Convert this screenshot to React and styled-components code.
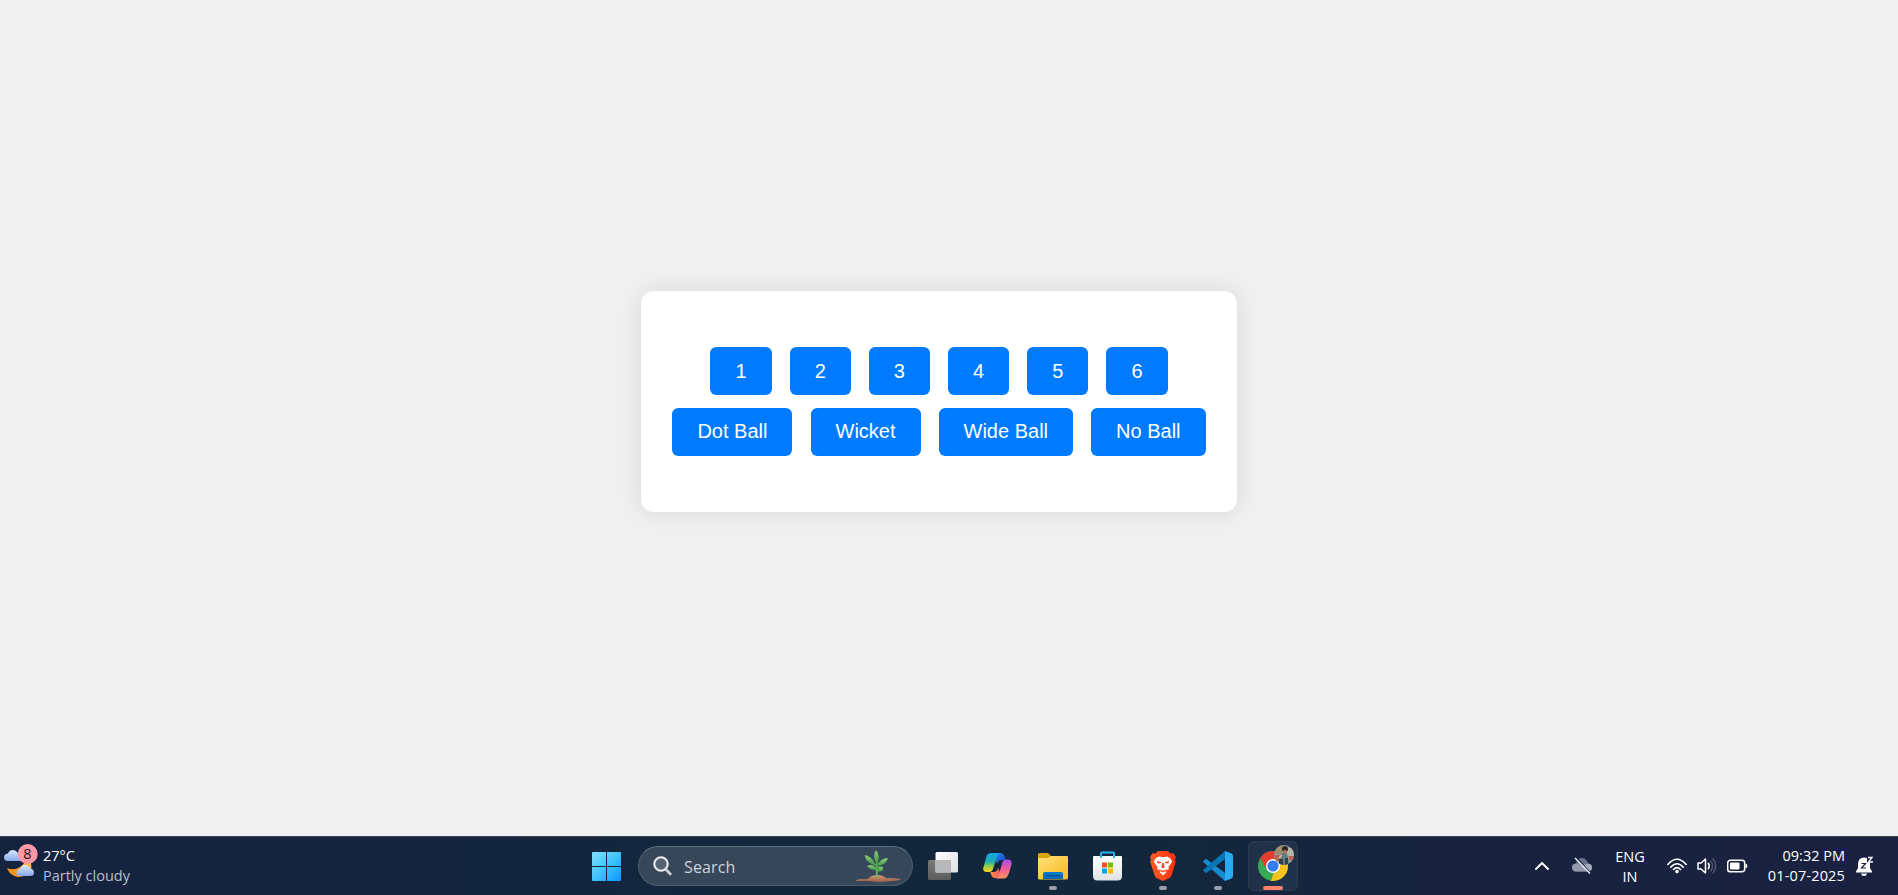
import React from "react";
import styled, { createGlobalStyle } from "styled-components";

const GlobalStyle = createGlobalStyle`
  * { box-sizing: border-box; }
  html, body, #root { height: 100%; }
  body { margin: 0; background: #f0f0f0; overflow: hidden; }
`;

const Screen = styled.div`
  display: flex;
  flex-direction: column;
  height: 895px;
  width: 1898px;
`;

const Page = styled.main`
  flex: 1;
  padding: 291px 20px 0 0;
  display: flex;
  justify-content: center;
  align-items: flex-start;
  background: #f0f0f0;
`;

const Card = styled.section`
  width: 596px;
  height: 221px;
  padding-top: 56px;
  display: flex;
  flex-direction: column;
  align-items: center;
  gap: 13px;
  background: #fff;
  border-radius: 12.5px;
  box-shadow: 0 0 25px rgba(0, 0, 0, 0.1);
`;

const ButtonRow = styled.div`
  display: flex;
  gap: ${(p) => p.$gap}px;
`;

const ScoreButton = styled.button`
  height: 48px;
  padding: ${(p) => (p.$raised ? "0 25px 1px" : "0 25px")};
  border: 0;
  border-radius: 6.25px;
  background: #007bff;
  color: #fff;
  font: 20px "Liberation Sans", Arial, sans-serif;
  white-space: nowrap;
`;

const Taskbar = styled.footer`
  height: 59px;
  display: flex;
  border-top: 1px solid #3b4652;
  background: linear-gradient(90deg, #15233f 0, #14243f 400px, #12273d 700px, #12273c 1150px, #17233f 1450px, #1a2140 1898px);
  font-family: "Open Sans", "Noto Sans", sans-serif;
  color: #fff;
`;

const Weather = styled.div`
  width: 579px;
  padding-left: 4px;
  display: flex;
`;

const WeatherText = styled.div`
  padding: 9px 0 0 5px;
  display: flex;
  flex-direction: column;
`;

const Label = styled.span`
  height: 20px;
  line-height: 20px;
  font-size: ${(p) => p.$size || 14.5}px;
  letter-spacing: ${(p) => p.$track || 0}px;
  color: ${(p) => (p.$dim ? "#b9bfca" : "#fff")};
  white-space: nowrap;
`;

const Slot = styled.div`
  width: ${(p) => p.$width || 55}px;
  height: 58px;
  display: flex;
  align-items: center;
  justify-content: center;
  position: relative;
`;

const ActiveTile = styled.div`
  width: 50px;
  height: 50px;
  border-radius: 6px;
  border: 1px solid #2b3b50;
  background: #20314a;
  display: flex;
  align-items: center;
  justify-content: center;
`;

const Indicator = styled.span`
  position: absolute;
  bottom: 5px;
  width: ${(p) => (p.$active ? 20 : 8)}px;
  height: 4px;
  border-radius: 2px;
  background: ${(p) => (p.$active ? "#f9836c" : "#989eaa")};
`;

const Search = styled.div`
  width: 275px;
  height: 40px;
  margin: 9px 2px 0 4px;
  padding: 0 10px 0 14px;
  display: flex;
  align-items: center;
  border: 1px solid #4a5b6c;
  border-top-color: #617080;
  border-radius: 20px;
  background: #36475a;
`;

const SearchText = styled.span`
  flex: 1;
  padding: 1px 0 0 12px;
  font-size: 16px;
  letter-spacing: 0.15px;
  color: #ced4dc;
`;

const Tray = styled.div`
  margin-left: auto;
  padding-right: 13px;
  display: flex;
`;

const Language = styled.div`
  width: 56px;
  margin-right: 4px;
  padding-top: 10px;
  display: flex;
  flex-direction: column;
  align-items: center;
`;

const Clock = styled.div`
  width: 93px;
  padding-top: 9px;
  display: flex;
  flex-direction: column;
  align-items: flex-end;
`;

const WeatherIcon = () => (
  <svg width="34" height="58" viewBox="4 837 34 58">
    <defs>
      <linearGradient id="cl" x1="0" y1="0" x2="0" y2="1"><stop stopColor="#dceaff" /><stop offset="1" stopColor="#86a8ea" /></linearGradient>
      <linearGradient id="mn" x1="1" y1="0" x2="0" y2="1"><stop stopColor="#ffc44a" /><stop offset="1" stopColor="#ed830c" /></linearGradient>
    </defs>
    <path d="M8 861Q4 861 4 857.500Q4 854 8 853.500Q9 850 13 850Q16 850 18 853L24 857V861Z" fill="url(#cl)" />
    <path d="M27 857Q33 863 31 870Q27 877 18 877Q10 876 7 868Q14 871 20 867Q26 863 25 858Z" fill="url(#mn)" />
    <path d="M20 876Q16.500 876 16.500 872.500Q17 869.500 20 869Q21 865 25.500 865Q29 865 30 868.500Q34 869 34 872.500Q34 876 30 876Z" fill="url(#cl)" />
    <circle cx="27.700" cy="854" r="10" fill="#ff98a4" />
    <text x="27.400" y="859" textAnchor="middle" fontSize="14.500" fontFamily="Open Sans" fill="#17171c">8</text>
  </svg>
);

const StartIcon = () => (
  <svg width="29" height="29" viewBox="0 0 29 29">
    <defs><linearGradient id="st" gradientUnits="userSpaceOnUse" x1="0" y1="0" x2="29" y2="29"><stop stopColor="#83e1fc" /><stop offset=".55" stopColor="#3bbffd" /><stop offset="1" stopColor="#0c94fb" /></linearGradient></defs>
    <path d="M1 0h13v14H0V1Q0 0 1 0ZM15 0h13q1 0 1 1v13H15ZM0 15h14v14H1q-1 0-1-1ZM15 15h14v13q0 1-1 1H15Z" fill="url(#st)" />
  </svg>
);

const SearchIcon = () => (
  <svg width="19" height="20" viewBox="0 0 19 20" fill="none">
    <circle cx="8" cy="8" r="6.700" stroke="#e9ecf0" strokeWidth="2.100" fill="#536172" />
    <path d="M13 13.500 17.300 18" stroke="#cfd3d9" strokeWidth="2.600" strokeLinecap="round" />
  </svg>
);

const PlantIcon = () => (
  <svg width="47" height="32" viewBox="0 0 47 32">
    <defs>
      <linearGradient id="lf" x1="0" y1="0" x2="0" y2="1"><stop stopColor="#8ccc78" /><stop offset="1" stopColor="#409648" /></linearGradient>
      <linearGradient id="so" x1="0" y1="0" x2="0" y2="1"><stop stopColor="#d99a77" /><stop offset="1" stopColor="#995d46" /></linearGradient>
    </defs>
    <path d="M1 31Q1 29 7 29Q11 30 14 28Q17 25 22 25Q28 25 31 28Q38 28 46 29Q43 31 36 31Q24 33 14 31Z" fill="url(#so)" />
    <path d="M22 28Q21 19 22 8" stroke="#64b65b" strokeWidth="1.700" fill="none" />
    <g fill="url(#lf)">
      <path d="M21.500 14Q17 6 21 0Q26 6 22 14Z" />
      <path d="M20.500 15Q11 13 9.500 5Q17 6 20.500 15Z" />
      <path d="M22 16Q25 8 33 8Q31 15 22 16Z" />
      <path d="M20.500 20Q15 20 12 16Q19 13 22 20Z" />
      <path d="M21.500 21Q23 15 28 17Q29 23 21.500 21Z" />
    </g>
    <path d="M17 13Q27 17 22 22" stroke="#4aa451" strokeWidth="1.500" fill="none" />
  </svg>
);

const TaskViewIcon = () => (
  <svg width="30" height="28" viewBox="0 0 30 28">
    <defs><linearGradient id="tv" x2="1" y2="1"><stop stopColor="#fff" /><stop offset="1" stopColor="#dedfe1" /></linearGradient><linearGradient id="tg" x2="0" y2="1"><stop stopColor="#7b7b7b" /><stop offset="1" stopColor="#5b5b5b" /></linearGradient></defs>
    <rect y="8" width="23" height="20" rx="1.500" fill="url(#tg)" />
    <rect x="7.500" width="22.500" height="20.500" rx="1.500" fill="url(#tv)" />
    <path d="M7.500 8H23v12.500H7.500Z" fill="#b8b9ba" />
  </svg>
);

const CopilotIcon = () => (
  <svg width="29" height="26" viewBox="0 0 29 26">
    <defs>
      <linearGradient id="ca" x2="0" y2="1"><stop stopColor="#12a5e9" /><stop offset=".45" stopColor="#22acb0" /><stop offset=".7" stopColor="#8fcb49" /><stop offset="1" stopColor="#ffd51d" /></linearGradient>
      <linearGradient id="cb" x2="0" y2="1"><stop stopColor="#a54ce8" /><stop offset=".5" stopColor="#ef5b98" /><stop offset="1" stopColor="#ff9859" /></linearGradient>
      <linearGradient id="cc" x2="1" y2="1"><stop stopColor="#2787ef" /><stop offset="1" stopColor="#1744c3" /></linearGradient>
      <linearGradient id="cd" x2="1"><stop stopColor="#fa9846" /><stop offset="1" stopColor="#f64e64" /></linearGradient>
    </defs>
    <path d="M14 0h3q3.500 0 4.500 3.500L23 7h-4q-4 0-5 4L11 5Z" fill="url(#cc)" />
    <path d="M7 19h4q3 0 4-4l3 6q-1 4-4 4h-2q-3 0-4-4Z" fill="url(#cd)" />
    <path d="M8 0h10q-3 0-4 4l-4 12q-1 3-4 3H4Q-1 19 .500 14L3 5Q4 0 8 0Z" fill="url(#ca)" />
    <path d="M20 6.500h5q4.500 0 3.500 5L26 20q-1.500 5.500-6 5.500h-8q3 0 4-4l3-11q1-4 4-4Z" fill="url(#cb)" />
  </svg>
);

const FolderIcon = () => (
  <svg width="30" height="28" viewBox="0 0 30 28">
    <defs><linearGradient id="fo" x2="1" y2="1"><stop stopColor="#ffe079" /><stop offset="1" stopColor="#f8b91f" /></linearGradient><linearGradient id="fb" x2="0" y2="1"><stop stopColor="#087cd3" /><stop offset="1" stopColor="#0767bb" /></linearGradient></defs>
    <path d="M0 9V2Q0 1 2 1h8l3 3v5Z" fill="#dca209" />
    <path d="M0 6h10l3-2h16q1 0 1 1v21q0 1.500-1.500 1.500h-27Q0 27.500 0 26Z" fill="url(#fo)" />
    <path d="M5 27v-5q0-2 2-2h16q2 0 2 2v5Z" fill="url(#fb)" />
    <path d="M8 23.700h14" stroke="#064b8d" strokeWidth="1.200" />
  </svg>
);

const StoreIcon = () => (
  <svg width="29" height="30" viewBox="0 0 29 30">
    <defs><linearGradient id="ms" x2="0" y2="1"><stop stopColor="#fff" /><stop offset="1" stopColor="#dfe2e5" /></linearGradient></defs>
    <path d="M0 5.500Q0 5 1 5h27q1 0 1 .700V25q0 4.500-4.500 4.500h-20Q0 29.500 0 25Z" fill="url(#ms)" />
    <path d="M8 7V2.200Q8 1.500 9 1.500h11q1 0 1 .700V7" fill="none" stroke="#20b5ec" strokeWidth="2" />
    <path d="M9 11.500h5v5H9Z" fill="#f25022" /><path d="M15 11.500h5v5h-5Z" fill="#7fba00" />
    <path d="M9 17.500h5v5H9Z" fill="#00a4ef" /><path d="M15 17.500h5v5h-5Z" fill="#ffb900" />
  </svg>
);

const BraveIcon = () => (
  <svg width="26" height="30" viewBox="0 0 26 30">
    <defs><linearGradient id="br" x2="1"><stop stopColor="#ff5b25" /><stop offset="1" stopColor="#f8320c" /></linearGradient></defs>
    <path d="M8 0h10l2.500 2.500 3-.300L26 6l-1 2.500.700 2.500-4 13Q21 26 19.500 27L13 30l-6.500-3Q5 26 4.500 24L.300 11 1 8.500 0 6l2.500-3.800 3 .300Z" fill="url(#br)" />
    <path d="M13 6.300 17 5.500 20 7 22.300 10.500 20.500 13.300 18.500 15.800 19 18 15.500 19.500 16.500 21 13 24.500 9.500 21 10.500 19.500 7 18 7.500 15.800 5.500 13.300 3.700 10.500 6 7 9 5.500Z" fill="#fff" />
    <path d="m7 10 4 1v1l-3.500.500Zm12 0-4 1v1l3.500.500ZM12 12h2l.500 4.500L13 17.500l-1.500-1ZM9.500 18.500 13 19.700l3.500-1.200-1 2L13 21.500l-2.500-1Z" fill="#fb4a20" />
  </svg>
);

const VscodeIcon = () => (
  <svg width="30" height="30" viewBox="0 0 30 30">
    <path d="m.500 10 2-1.800q.600-.500 1.300 0L22 22v8L.500 11.300Q0 10.700.500 10Z" fill="#168bcf" />
    <path d="m.500 20 2 1.800q.600.500 1.300 0L22 8V0L.500 18.700Q0 19.300.500 20Z" fill="#0875b9" />
    <path d="m22 0 6.500 2.500Q30 3.200 30 5v20q0 1.800-1.500 2.500L22 30Z" fill="#29aaf2" />
  </svg>
);

const ChromeIcon = () => (
  <svg width="36" height="38" viewBox="1258 843 36 38">
    <defs>
      <clipPath id="cr"><circle cx="1273" cy="866" r="15" /></clipPath>
      <clipPath id="av"><circle cx="1284" cy="855" r="10" /></clipPath>
    </defs>
    <g clipPath="url(#cr)">
      <path d="M1258 851h30v30h-30Z" fill="#37a853" />
      <path d="M1273 859h15v22h-15l6.100-11Z" fill="#fcc31b" />
      <path d="M1279.100 870 1273 881h-2l4-12Z" fill="#fcc31b" />
      <path d="M1258 850h30v9h-15l-6.100 10.500L1260 858Z" fill="#e33c31" />
    </g>
    <circle cx="1273" cy="866" r="7" fill="#fff" /><circle cx="1273" cy="866" r="5.600" fill="#347cf0" />
    <g clipPath="url(#av)">
      <path d="M1274 845h20v20h-20Z" fill="#8aa097" />
      <path d="M1274 845h8v9h-8Z" fill="#9c8d6c" /><path d="M1286 848h8v8h-8Z" fill="#b4b7a3" />
      <path d="M1274 855h7v6h-7Z" fill="#b66554" /><path d="M1289 856h5v4h-5Z" fill="#c3634f" />
      <path d="M1281 853h6l2 12h-8Z" fill="#607d88" />
      <path d="M1279 859h4v6h-4ZM1285 858h3v7h-3Z" fill="#31424b" />
      <circle cx="1285" cy="849" r="3" fill="#33251f" /><path d="M1283.500 850h3v4h-3Z" fill="#a87458" />
      <path d="m1282 855-3 3" stroke="#dcc0a8" strokeWidth="1.500" />
    </g>
  </svg>
);

const ChromeWrap = styled.div`
  width: 30px;
  height: 38px;
  margin-bottom: 8px;
  display: flex;
  svg { flex: none; }
`;

const ChevronIcon = () => (
  <svg width="14" height="8" viewBox="0 0 14 8"><path d="m1 7 6-6 6 6" fill="none" stroke="#fff" strokeWidth="1.900" strokeLinecap="round" /></svg>
);

const CloudOffIcon = () => (
  <svg width="20" height="18" viewBox="0 0 20 18">
    <path d="M4.500 14.500Q0 14.500 0 10.500 0 7 4 6.500 5.500 1 10 1t6 5.500q4 .500 4 4t-4 4Z" fill="#69728a" />
    <path d="M4.500 14.500Q0 14.500 0 10.500 0 7 4 6.500q2-.500 5 2l7 6Z" fill="#929aab" /><path d="m9 9 7-2.500q4 .500 4 4t-4 4Z" fill="#a5abb9" />
    <path d="m4.500 1 14 15" stroke="#1a2542" strokeWidth="1.600" /><path d="m3 1 15 15.500" stroke="#f3f4f6" strokeWidth="1.300" />
  </svg>
);

const WifiIcon = () => (
  <svg width="20" height="16" viewBox="0 0 20 16" fill="none" stroke="#fff" strokeWidth="1.600" strokeLinecap="round">
    <path d="M.800 6.500q9.200-10.500 18.400 0M3.700 9.200q6.300-7 12.600 0M6.500 11.500q3.500-3.800 7 0" />
    <circle cx="10" cy="13.600" r="1" fill="#fff" />
  </svg>
);

const SpeakerIcon = () => (
  <svg width="20" height="18" viewBox="0 0 20 18" fill="none" stroke="#fff" strokeWidth="1.500" strokeLinejoin="round" strokeLinecap="round">
    <path d="M1 6h3l4.500-4v14L4 12H1Z" /><path d="M11.300 6.300q2 2.700 0 5.400" />
    <path d="M13.700 4q3.800 5 0 10M16 2q5.500 7 0 14" stroke="#4c556f" />
  </svg>
);

const BatteryIcon = () => (
  <svg width="21" height="14" viewBox="0 0 21 14">
    <rect x=".700" y="1.200" width="17" height="11.600" rx="2.700" fill="none" stroke="#fff" strokeWidth="1.500" />
    <rect x="3" y="3.500" width="9.500" height="7" rx="1" fill="#fff" /><path d="M18.500 4.500q1.800.300 1.800 2.500t-1.800 2.500Z" fill="#fff" />
  </svg>
);

const BellIcon = () => (
  <svg width="18" height="21" viewBox="0 0 18 21">
    <path d="M2 7.500Q2.500 1.500 8 1.500t6 6V12l2 3.500v1H0v-1L2 12ZM5 17.500h6Q10.500 20 8 20t-3-2.500Z" fill="#fff" />
    <path d="M11 0h7v6.500h-7Z" fill="#1a2140" />
    <path d="M5.500 7.500h4l-4 4.500h4.500" fill="none" stroke="#1a2140" strokeWidth="1.200" />
    <path d="M12 1.500h4L12.500 6H17" fill="none" stroke="#fff" strokeWidth="1.300" />
  </svg>
);

const runs = ["1", "2", "3", "4", "5", "6"];
const events = ["Dot Ball", "Wicket", "Wide Ball", "No Ball"];
const apps = [
  { id: "taskview", Icon: TaskViewIcon },
  { id: "copilot", Icon: CopilotIcon },
  { id: "explorer", Icon: FolderIcon, open: true },
  { id: "store", Icon: StoreIcon },
  { id: "brave", Icon: BraveIcon, open: true },
  { id: "vscode", Icon: VscodeIcon, open: true },
];

export default function App() {
  return (
    <Screen>
      <GlobalStyle />
      <Page>
        <Card>
          <ButtonRow $gap={18.09}>{runs.map((r) => <ScoreButton key={r}>{r}</ScoreButton>)}</ButtonRow>
          <ButtonRow $gap={18.06}>{events.map((e) => <ScoreButton key={e} $raised>{e}</ScoreButton>)}</ButtonRow>
        </Card>
      </Page>
      <Taskbar>
        <Weather>
          <WeatherIcon />
          <WeatherText>
            <Label>27°C</Label>
            <Label $dim>Partly cloudy</Label>
          </WeatherText>
        </Weather>
        <Slot><StartIcon /></Slot>
        <Search>
          <SearchIcon />
          <SearchText>Search</SearchText>
          <PlantIcon />
        </Search>
        {apps.map(({ id, Icon, open }) => (
          <Slot key={id}><Icon />{open && <Indicator />}</Slot>
        ))}
        <Slot>
          <ActiveTile><ChromeWrap><ChromeIcon /></ChromeWrap></ActiveTile>
          <Indicator $active />
        </Slot>
        <Tray>
          <Slot $width={40}><ChevronIcon /></Slot>
          <Slot $width={40}><CloudOffIcon /></Slot>
          <Language><Label>ENG</Label><Label>IN</Label></Language>
          <Slot $width={30}><WifiIcon /></Slot>
          <Slot $width={30}><SpeakerIcon /></Slot>
          <Slot $width={30}><BatteryIcon /></Slot>
          <Clock><Label>09:32 PM</Label><Label $track={0.15}>01-07-2025</Label></Clock>
          <Slot $width={40}><BellIcon /></Slot>
        </Tray>
      </Taskbar>
    </Screen>
  );
}
